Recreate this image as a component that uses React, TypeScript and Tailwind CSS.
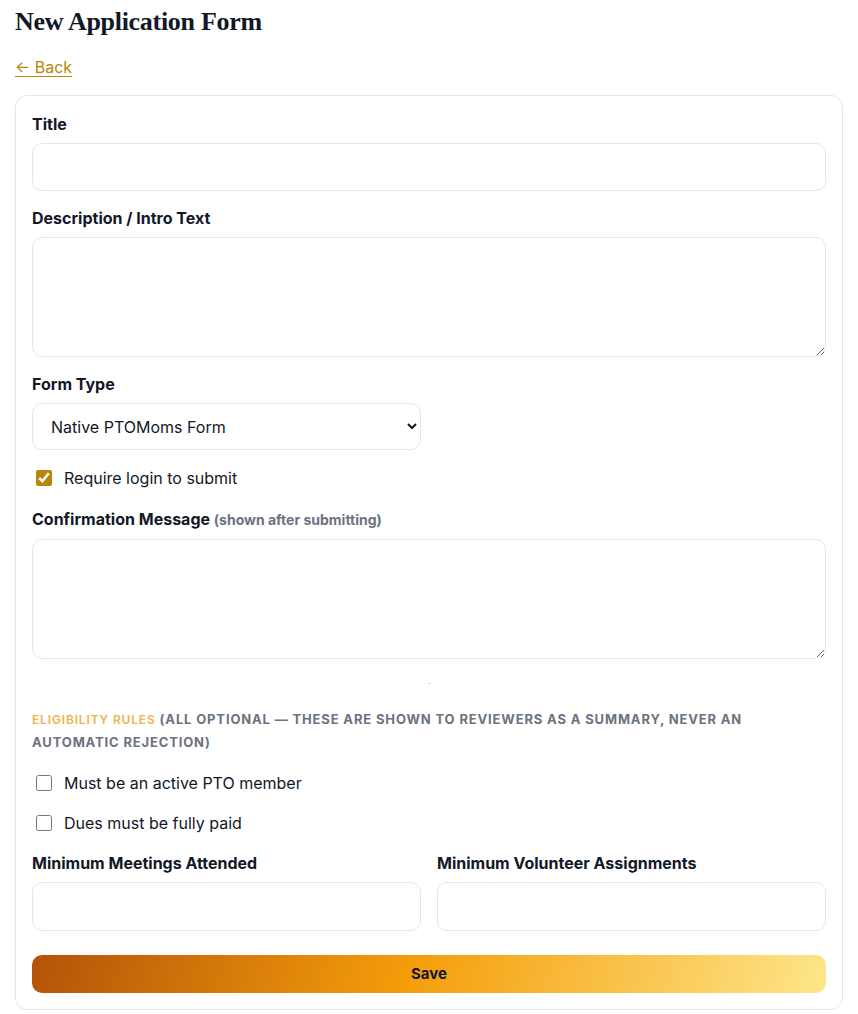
import type { ReactNode } from "react";

const sans = { fontFamily: "Inter, 'Noto Sans', sans-serif" };

function Label({ children }: { children: ReactNode }) {
  return (
    <label className="mb-2 block text-[16px] font-bold leading-[22px] text-[#111827]">
      {children}
    </label>
  );
}

function Check({ label, checked }: { label: string; checked?: boolean }) {
  return (
    <label className="flex h-6 items-center gap-3 pl-1 text-[16px] text-[#111827]">
      <input
        type="checkbox"
        defaultChecked={checked}
        className="h-4 w-4 accent-[#b8860b]"
      />
      {label}
    </label>
  );
}

const field =
  "block rounded-[10px] border border-[#e5e7eb] bg-white text-[16px] text-[#111827] outline-none";

export default function App() {
  return (
    <div className="min-h-screen bg-white px-[15px] pt-[4px] pb-4" style={sans}>
      <h1
        className="text-[26px] font-bold leading-[36px] tracking-[-0.3px] text-[#111827]"
        style={{ fontFamily: "'Liberation Serif', serif" }}
      >
        New Application Form
      </h1>
      <a
        href="#"
        className="mt-[16px] inline-block text-[16px] leading-[22px] text-[#b8860b] underline underline-offset-[3px]"
      >
        ← Back
      </a>

      <form className="mt-[16px] rounded-[12px] border border-[#e5e7eb] px-4 pt-[17px] pb-4">
        <div className="mb-4">
          <Label>Title</Label>
          <input className={`${field} h-[48px] w-full px-4`} />
        </div>

        <div className="mb-4">
          <Label>Description / Intro Text</Label>
          <textarea className={`${field} h-[120px] w-full px-4 py-2`} />
        </div>

        <div className="mb-4">
          <Label>Form Type</Label>
          <select className={`${field} h-[47px] w-[389px] pl-[14px] pr-2`}>
            <option>Native PTOMoms Form</option>
          </select>
        </div>

        <div className="mb-[18px]">
          <Check label="Require login to submit" checked />
        </div>

        <div>
          <Label>
            Confirmation Message{" "}
            <span className="text-[14px] font-bold text-[#6b7280]">
              (shown after submitting)
            </span>
          </Label>
          <textarea className={`${field} h-[120px] w-full px-4 py-2`} />
        </div>

        <div className="my-6 flex justify-center">
          <div className="h-px w-px bg-[#9ca3af]" />
        </div>

        <p className="text-[13px] font-bold uppercase leading-[22px] tracking-[0.85px] text-[#6b7280]">
          <span className="text-[12px] font-semibold text-[#f0b24a]">Eligibility Rules</span>{" "}
          (All optional — these are shown to reviewers as a summary, never an automatic
          rejection)
        </p>

        <div className="mt-[18px] flex flex-col gap-4">
          <Check label="Must be an active PTO member" />
          <Check label="Dues must be fully paid" />
        </div>

        <div className="mt-[17px] grid grid-cols-2 gap-4">
          <div>
            <Label>Minimum Meetings Attended</Label>
            <input type="number" className={`${field} h-[49px] w-full px-4`} />
          </div>
          <div>
            <Label>Minimum Volunteer Assignments</Label>
            <input type="number" className={`${field} h-[49px] w-full px-4`} />
          </div>
        </div>

        <button
          type="button"
          className="mt-6 h-[38px] w-full rounded-[10px] bg-[linear-gradient(105deg,#b45309_0%,#f59e0b_48%,#fde68a_100%)] text-[15px] font-bold text-[#111827]"
        >
          Save
        </button>
      </form>
    </div>
  );
}
